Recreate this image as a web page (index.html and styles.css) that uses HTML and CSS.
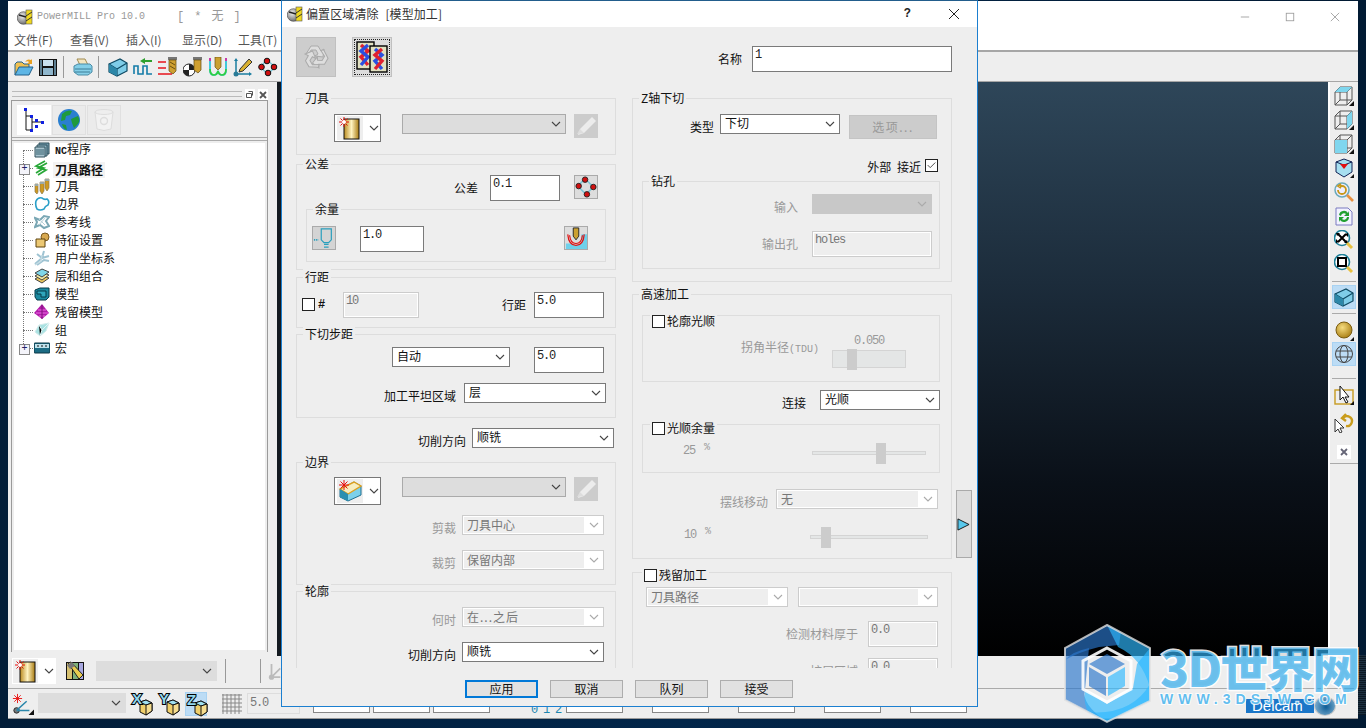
FILE: index.html
```html
<!DOCTYPE html>
<html lang="zh-CN">
<head>
<meta charset="utf-8">
<title>PowerMILL Pro 10.0</title>
<link rel="stylesheet" href="styles.css">
</head>
<body>
<svg class="sprite" aria-hidden="true">
  <defs>
    <linearGradient id="gold" x1="0" x2="1" y1="0" y2="0"><stop offset="0" stop-color="#b98a1e"/><stop offset=".5" stop-color="#fff3c0"/><stop offset="1" stop-color="#a87a10"/></linearGradient>
    <radialGradient id="ball" cx=".4" cy=".35" r=".7"><stop offset="0" stop-color="#f6dc7e"/><stop offset="1" stop-color="#a77c12"/></radialGradient>
    <radialGradient id="sph" cx=".4" cy=".35" r=".7"><stop offset="0" stop-color="#eee"/><stop offset="1" stop-color="#666"/></radialGradient>
  </defs>
  <symbol id="app" viewBox="0 0 16 16"><circle cx="6.5" cy="9" r="6.3" fill="url(#sph)" stroke="#444" stroke-width=".6"/><rect x="9" y="1" width="6" height="14" fill="#f0d820" stroke="#555" stroke-width=".6"/><path d="M9 7l6-4M9 12l6-4" stroke="#333"/><path d="M2 6l7 2" stroke="#222" stroke-width="1.4"/></symbol>
  <symbol id="folder" viewBox="0 0 20 20"><path d="M1 18V7l2-2h5l2 2h5v3" fill="#f0c050" stroke="#22618c"/><path d="M1 18l4-8h14l-4 8z" fill="#5db5e5" stroke="#22618c"/><path d="M11 5c2-3 4-3 6-2l1-1v5h-5l2-2c-1-1-2-1-4 0z" fill="#e8a020"/></symbol>
  <symbol id="save" viewBox="0 0 20 20"><rect x="1" y="2" width="18" height="17" fill="#111"/><rect x="5" y="3" width="10" height="6" fill="#c9e0ee"/><rect x="5" y="11" width="10" height="7" fill="#8fb6cc"/><rect x="2" y="3" width="2" height="15" fill="#5d7f92"/><rect x="16" y="3" width="2" height="15" fill="#5d7f92"/></symbol>
  <symbol id="print" viewBox="0 0 20 20"><path d="M4 2h8l3 6H7z" fill="#f4e6c0" stroke="#a08a50"/><path d="M1 9l4-2h12l2 2v6l-4 3H5l-4-3z" fill="#84cfe8" stroke="#4b8ba5"/><path d="M2 12h16M2 15h15" stroke="#3c7d96"/></symbol>
  <symbol id="block" viewBox="0 0 20 20"><path d="M1 7l11-5 7 4v8l-10 5-8-4z" fill="#7fcde8" stroke="#0f4a63" stroke-width="1.2"/><path d="M1 7l8 5v7M9 12l10-6" fill="none" stroke="#0f4a63" stroke-width="1.2"/><path d="M1 7l8 5v7l-8-4z" fill="#2c87a8"/></symbol>
  <symbol id="path" viewBox="0 0 20 20"><path d="M1 17V9h4v8h5V9h4v8h5" fill="none" stroke="#157ca8" stroke-width="1.6"/><path d="M7 4l5-3v2h7v2h-7v2z" fill="#2ea02e"/></symbol>
  <symbol id="toolred" viewBox="0 0 20 20"><path d="M0 5h8M0 11h8M0 17h14" stroke="#e8141c" stroke-width="1.6"/><rect x="10" y="0" width="9" height="3" fill="#777"/><path d="M11 3h7v11l-3 3-4-3z" fill="#cfa030" stroke="#5d4810" stroke-width=".7"/><path d="M12 5l5 3M12 9l5 3" stroke="#6a5010"/></symbol>
  <symbol id="toolshade" viewBox="0 0 20 20"><circle cx="6" cy="13" r="6" fill="#fff" stroke="#222"/><path d="M6 7a6 6 0 0 1 6 6H6zM6 13v6a6 6 0 0 1-6-6z" fill="#222"/><rect x="10" y="0" width="9" height="3" fill="#777"/><path d="M11 3h7v10l-3 3-4-3z" fill="#cfa030" stroke="#5d4810" stroke-width=".7"/></symbol>
  <symbol id="uw" viewBox="0 0 20 20"><path d="M2 1v12q0 5 4 5 3 0 4-4 1 4 4 4 4 0 4-5V1" fill="none" stroke="#22c0d8" stroke-width="1.7"/><path d="M2 12q0 6 4 6 3 0 4-4 1 4 4 4 4 0 4-6" fill="none" stroke="#30d040" stroke-width="1.7"/><path d="M2 1v3M18 1v3" stroke="#e020a0" stroke-width="1.7"/><path d="M7 0h6v10l-3 3-3-3z" fill="#caa030" stroke="#6a5010" stroke-width=".7"/></symbol>
  <symbol id="pencil" viewBox="0 0 20 20"><path d="M3 3v14h14" fill="none" stroke="#1a7da0" stroke-width="1.5"/><path d="M3 1l2 3H1zM19 17l-3 2v-4z" fill="#1a7da0"/><circle cx="3" cy="17" r="2.5" fill="#2a7a96"/><path d="M7 12l9-10 3 3-9 9-4 1z" fill="#d9b030" stroke="#333"/></symbol>
  <symbol id="diamond" viewBox="0 0 20 20"><path d="M9 3l8 7-7 7-8-7z" fill="none" stroke="#7cc7d7" stroke-width="1.6"/><g fill="#d01010" stroke="#111"><circle cx="9" cy="4" r="2.8"/><circle cx="16" cy="10" r="2.8"/><circle cx="10" cy="16" r="2.8"/><circle cx="3.5" cy="10" r="2.8"/></g></symbol>
  <symbol id="nc" viewBox="0 0 16 16"><path d="M5 1h10v11H5z" fill="#6e98aa" stroke="#33525f"/><path d="M3 3h10v11H3z" fill="#8db3c2" stroke="#33525f"/><path d="M1 5h10v10H1z" fill="#a9c4cf" stroke="#33525f"/><path d="M2 8h8M2 10h8M2 12h8" stroke="#35606f"/></symbol>
  <symbol id="tp" viewBox="0 0 16 16"><path d="M13 3L4 8l8 2-8 5M11 1L2 6l8 2-8 5" fill="none" stroke="#28a838" stroke-width="1.7"/></symbol>
  <symbol id="tls" viewBox="0 0 16 16"><path d="M1 6h3v8l-1 2-2-2zM6 4h4v9l-2 3-2-3zM11 1h4v9l-2 3-2-3z" fill="#cf9a20" stroke="#8a7a50" stroke-width=".7"/><path d="M1 6h3v2H1zM6 4h4v2H6zM11 1h4v2h-4z" fill="#9aa"/></symbol>
  <symbol id="bd" viewBox="0 0 16 16"><path d="M2 5q2-4 6-3 2 2 5 1 3 2 1 6-3 1-4 4-4 2-7 0-2-4-1-8z" fill="#fff" stroke="#2a9fc8" stroke-width="1.6"/></symbol>
  <symbol id="rl" viewBox="0 0 16 16"><path d="M1 4l5 2 4-4 5 1-3 4 3 5-5 2-4-3-5 2 2-5z" fill="none" stroke="#7aa7b4" stroke-width="2"/><path d="M5 5l6 6M11 4l-6 7" stroke="#b9d1d8"/></symbol>
  <symbol id="ft" viewBox="0 0 16 16"><circle cx="11" cy="5" r="4" fill="#d8a950" stroke="#7a5a20"/><path d="M2 7h9v8H2z" fill="#ecc873" stroke="#5e4510"/></symbol>
  <symbol id="ucs" viewBox="0 0 16 16"><path d="M1 14L8 8l2-7M8 8l7-2M3 15l7-5 5 1M8 8L3 4" fill="none" stroke="#9ec3d2" stroke-width="2"/><path d="M1 15l6-4 1-6" fill="none" stroke="#c5dbe3" stroke-width="1.4"/></symbol>
  <symbol id="ly" viewBox="0 0 16 16"><path d="M1 11l7-4 7 3-7 5z" fill="#ecc85c" stroke="#444"/><path d="M1 8l7-4 7 3-7 5z" fill="#f1e9a5" stroke="#444"/><path d="M1 5l7-4 7 3-7 5z" fill="#7fd6e8" stroke="#444"/></symbol>
  <symbol id="md" viewBox="0 0 16 16"><path d="M1 4l5-2h9v9l-3 3H3l-2-3z" fill="#1c8aa0" stroke="#063a48"/><path d="M3 5h9v6H7V8H3z" fill="#2fa6bb" stroke="#063a48"/></symbol>
  <symbol id="st" viewBox="0 0 16 16"><path d="M8 0l7 9-7 6-8-6z" fill="#b01ca8"/><path d="M4 6l8 0M2 9l12 0M5 12h6" stroke="#f06ae6"/><path d="M8 1v14" stroke="#7d1278"/></symbol>
  <symbol id="gp" viewBox="0 0 16 16"><path d="M1 10l4-7 10-2-3 8-6 5z" fill="#a9e2e2" stroke="#d2ecec"/><path d="M5 3l3 5-2 6M8 8l7-7" stroke="#e2f5f5"/></symbol>
  <symbol id="mc" viewBox="0 0 16 16"><rect y="3" width="16" height="10" rx="1" fill="#1c6c84" stroke="#0b3744"/><rect x="1" y="4" width="14" height="4" fill="#bfe2ec"/><path d="M3 6h2M7 6h2M11 6h2" stroke="#111"/></symbol>
  <symbol id="tabtree" viewBox="0 0 22 24"><path d="M3 1v21h7M3 8h6v13M9 14h11" fill="none" stroke="#111"/><g fill="#1020e0"><rect x="1" y="0" width="3" height="3"/><rect x="7" y="7" width="3" height="3"/><rect x="12" y="11" width="3" height="3"/><rect x="18" y="13" width="3" height="3"/><rect x="12" y="17" width="3" height="3"/><rect x="7" y="21" width="3" height="3"/></g></symbol>
  <symbol id="globe" viewBox="0 0 24 24"><circle cx="12" cy="12" r="11" fill="#2a7fd0"/><path d="M5 6q5-5 10-3l-2 4-4 1-1 4-4 1zM14 11l7-3q3 5-1 9l-3 3-2-5zM5 16l4 1 1 5q-4-1-5-6z" fill="#1f9a3c"/></symbol>
  <symbol id="trash" viewBox="0 0 22 24"><path d="M2 4l2 17q7 3 14 0l2-17z" fill="#f2f2f2" stroke="#ddd"/><ellipse cx="11" cy="4" rx="9" ry="2.5" fill="#eee" stroke="#ddd"/><circle cx="11" cy="13" r="3.5" fill="none" stroke="#ddd" stroke-width="1.4"/></symbol>
  <symbol id="recycle" viewBox="0 0 32 32"><g fill="#dedede" stroke="#aaa"><path id="rc-arm" d="M6 13l5-8h7l3 5 3-2-1 8-8-1 3-2-2-4h-5l-3 6z"/><path d="M6 13l5-8h7l3 5 3-2-1 8-8-1 3-2-2-4h-5l-3 6z" transform="rotate(120 16 16)"/><path d="M6 13l5-8h7l3 5 3-2-1 8-8-1 3-2-2-4h-5l-3 6z" transform="rotate(240 16 16)"/></g></symbol>
  <symbol id="dna" viewBox="0 0 32 32"><rect x="1" y="1" width="17" height="27" fill="#e1e0c0" stroke="#000" stroke-width="1.4"/><path d="M5 4l7 6-7 6 7 8" fill="none" stroke="#e02030" stroke-width="3.400"/><path d="M12 4l-7 6 7 6-7 8" fill="none" stroke="#2a4fe0" stroke-width="3.400"/><rect x="14" y="5" width="17" height="26" fill="#e1e0c0" stroke="#000" stroke-width="1.4"/><path d="M19 8l7 6-7 6 7 8" fill="none" stroke="#2a4fe0" stroke-width="3.400"/><path d="M26 8l-7 6 7 6-7 8" fill="none" stroke="#e02030" stroke-width="3.400"/></symbol>
  <symbol id="newtool" viewBox="0 0 24 24"><rect x="6" y="3" width="15" height="20" fill="url(#gold)" stroke="#111"/><g stroke="#e81010"><path d="M1 6h10M6 1v10M2.500 2.500l7 7M9.500 2.500l-7 7"/></g><circle cx="6" cy="6" r="2" fill="#fff"/></symbol>
  <symbol id="newbd" viewBox="0 0 24 24"><path d="M2 10l14-7 7 4v9l-13 6-8-4z" fill="#7cd0ea" stroke="#1d6f90"/><path d="M2 10l8 5 13-8-7-4z" fill="#f7edc0" stroke="#dda020" stroke-width="1.4"/><path d="M2 10l8 5v7l-8-4z" fill="#2b8fb0"/><g stroke="#e81010"><path d="M1 6h10M6 1v10M2.500 2.500l7 7M9.500 2.500l-7 7"/></g></symbol>
  <symbol id="lib" viewBox="0 0 20 20"><rect x="1" y="1" width="18" height="18" fill="#111"/><rect x="2" y="2" width="5" height="16" fill="#d6c070"/><rect x="8" y="2" width="5" height="16" fill="#7fb07a"/><rect x="14" y="2" width="4" height="16" fill="#a8a8e0"/><path d="M3 2l3-1 12 13-4 4z" fill="#e8cc50" stroke="#222"/><path d="M2 4l5-3 3 4-5 3z" fill="#777"/></symbol>
  <symbol id="edit" viewBox="0 0 24 24"><path d="M6 15L18 3l4 4-12 12-6 2z" fill="#ececec"/><path d="M3 20l3-5 4 4z" fill="#ddd"/></symbol>
  <symbol id="chkdia" viewBox="0 0 24 24"><path d="M11 3l9 9-8 8-9-9z" fill="none" stroke="#7cc7d7" stroke-width="1.8"/><g fill="#d01010" stroke="#222"><circle cx="11" cy="4" r="3"/><circle cx="20" cy="12" r="3"/><circle cx="13" cy="20" r="3"/><circle cx="4" cy="11" r="3"/></g></symbol>
  <symbol id="thick" viewBox="0 0 24 24"><path d="M9 2h11v12l-3 3h-5l-3-3z" fill="none" stroke="#2a9fbd" stroke-width="1.3"/><path d="M1 14h5" stroke="#2a9fbd" stroke-width="1.8" stroke-dasharray="1.400 1"/><path d="M12 19h5M12 22h5" stroke="#2a9fbd" stroke-width="1.2"/></symbol>
  <symbol id="rad" viewBox="0 0 24 24"><path d="M1 18h5q6 3 12 0V8h6v16H1z" fill="#6fd0ea"/><path d="M5 9q1 9 7 9t7-9M3 8q1 12 9 12t9-12" fill="none" stroke="#e01010" stroke-width="1.3"/><path d="M9 1h6v9l-3 4-3-4z" fill="#caa030" stroke="#222"/></symbol>
  <symbol id="ax" viewBox="0 0 24 24"><circle cx="5" cy="19" r="3" fill="#777" stroke="#222"/><path d="M5 19L16 9M5 19h14" stroke="#2a86aa" stroke-width="1.6"/><g stroke="#e81010"><path d="M1 6h10M6 1v10M2.500 2.500l7 7M9.500 2.500l-7 7"/></g><path d="M24 24h-6l6-6z" fill="#111"/></symbol>
  <symbol id="axg" viewBox="0 0 16 24"><circle cx="4" cy="19" r="3" fill="#bbb"/><path d="M4 19V4M4 19h10M4 19L14 9" stroke="#bbb" stroke-width="2"/></symbol>
  <symbol id="vx" viewBox="0 0 22 24"><path d="M9 10l6-2 6 3v8l-6 4-6-3z" fill="#f0cf6a" stroke="#111"/><path d="M9 10l6 3 6-2-6-3z" fill="#9fe0f0" stroke="#111"/><path d="M15 13v10l6-4v-8z" fill="#f6dd8e" stroke="#111"/></symbol>
  <symbol id="grid" viewBox="0 0 20 20"><path d="M0 1h20M0 5h20M0 9h20M0 13h20M0 17h20M1 0v20M5 0v20M9 0v20M13 0v20M17 0v20" stroke="#888"/></symbol>
  <symbol id="cbase" viewBox="0 0 20 20"><path d="M1 6h12v13H1zM6 1h12v13H6zM1 6l5-5M13 6l5-5M1 19l5-5M13 19l5-5" fill="none" stroke="#555"/><path d="M20 20h-5l5-5z" fill="#111"/></symbol>
  <symbol id="isored" viewBox="0 0 20 20"><path d="M10 1l8 3v10l-8 5-8-5V4z" fill="#a7dff0" stroke="#125"/><path d="M2 4l8 3 8-3" fill="none" stroke="#125"/><path d="M6 6h8l-4 5z" fill="#e01010"/><path d="M20 20h-4l4-4z" fill="#111"/></symbol>
  <symbol id="zoomu" viewBox="0 0 20 20"><circle cx="8" cy="8" r="7" fill="#eef" stroke="#6aa9bb" stroke-width="1.5"/><path d="M4 8a4 4 0 1 0 4-4H6M7 2L4 4l3 2" fill="none" stroke="#c89818" stroke-width="1.8"/><path d="M13 13l6 6" stroke="#e89040" stroke-width="2.6"/></symbol>
  <symbol id="refresh" viewBox="0 0 20 20"><path d="M2 2h12l4 4v13H2z" fill="#f2f2ff" stroke="#7a7ac0"/><path d="M5 9a5 5 0 0 1 9-2l1-2v5h-5l2-2a3 3 0 0 0-5 2zM15 11a5 5 0 0 1-9 3l-1 2v-5h5l-2 2a3 3 0 0 0 5-2z" fill="#20a030"/></symbol>
  <symbol id="zfit" viewBox="0 0 20 20"><circle cx="8" cy="8" r="7.500" fill="#fff" stroke="#1d7f98" stroke-width="1.6"/><path d="M4 4l8 8M12 4l-8 8" stroke="#000" stroke-width="2"/><path d="M2 3h4L3 6zM14 3v4l-3-3zM2 13V9l3 3zM14 13h-4l3-3z"/><path d="M13 13l5 5" stroke="#e8c040" stroke-width="3"/></symbol>
  <symbol id="zbox" viewBox="0 0 20 20"><circle cx="8" cy="8" r="7.500" fill="#fff" stroke="#1d7f98" stroke-width="1.6"/><rect x="4" y="4" width="8" height="8" fill="none" stroke="#000" stroke-width="2"/><path d="M13 13l5 5" stroke="#e8c040" stroke-width="3"/></symbol>
  <symbol id="orb" viewBox="0 0 20 20"><circle cx="10" cy="9" r="8" fill="url(#ball)" stroke="#7a5c10"/><path d="M20 20h-4l4-4z" fill="#111"/></symbol>
  <symbol id="wire" viewBox="0 0 20 20"><circle cx="10" cy="10" r="8.500" fill="none" stroke="#444"/><ellipse cx="10" cy="10" rx="4" ry="8.500" fill="none" stroke="#444"/><path d="M2 7h16M2 13h16" stroke="#444"/></symbol>
  <symbol id="cur" viewBox="0 0 20 20"><rect x="1" y="5" width="18" height="14" fill="none" stroke="#c69a20" stroke-width="1.4"/><path d="M6 1v14l3-3 3 6 2-1-3-5h4z" fill="#fff" stroke="#111"/><path d="M20 20h-4l4-4z" fill="#111"/></symbol>
  <symbol id="curu" viewBox="0 0 20 20"><path d="M1 6v13l3-3 2 4 2-1-2-4h4z" fill="#fff" stroke="#333"/><path d="M9 5a5 5 0 1 1 3 8M12 1L8 5l4 3" fill="none" stroke="#c99c1c" stroke-width="2.400"/></symbol>
  <symbol id="chev" viewBox="0 0 10 6"><path d="M1 1l4 4 4-4" fill="none" stroke="currentColor" stroke-width="1.100"/></symbol>
  <symbol id="tick" viewBox="0 0 13 13"><path d="M2 6l3 3 6-6" fill="none" stroke="#333"/></symbol>
</svg>

<div class="desk">
  <section class="app">
    <header class="app-title">
      <svg class="ic16"><use href="#app"/></svg>
      <span class="app-name">PowerMILL Pro 10.0</span>
      <span class="app-doc">[ * 无 ]</span>
      <span class="win-btns">
        <svg class="win-ic" viewBox="0 0 12 12"><path d="M1 6h10" stroke="#999"/></svg>
        <svg class="win-ic" viewBox="0 0 12 12"><rect x="1.500" y="1.500" width="9" height="9" fill="none" stroke="#999"/></svg>
        <svg class="win-ic" viewBox="0 0 12 12"><path d="M1 1l10 10M11 1L1 11" stroke="#999"/></svg>
      </span>
    </header>
    <nav class="menu"><span>文件(F)</span><span>查看(V)</span><span>插入(I)</span><span>显示(D)</span><span>工具(T)</span></nav>
    <div class="toolbar">
      <svg class="ic20 tight"><use href="#folder"/></svg>
      <svg class="ic20"><use href="#save"/></svg>
      <i class="vsep"></i>
      <svg class="ic20"><use href="#print"/></svg>
      <i class="vsep"></i>
      <svg class="ic20"><use href="#block"/></svg>
      <svg class="ic20"><use href="#path"/></svg>
      <svg class="ic20"><use href="#toolred"/></svg>
      <svg class="ic20"><use href="#toolshade"/></svg>
      <svg class="ic20"><use href="#uw"/></svg>
      <svg class="ic20"><use href="#pencil"/></svg>
      <svg class="ic20"><use href="#diamond"/></svg>
    </div>
    <main class="work">
      <aside class="explorer">
        <div class="grip"><i class="grip-lines"></i>
          <svg class="dock-btn" viewBox="0 0 10 11"><path d="M3.500 2.500h4v4M1.500 4.500h5v4h-5z" fill="none" stroke="#555"/></svg>
          <svg class="dock-btn" viewBox="0 0 10 11"><path d="M2 3l6 6M8 3L2 9" stroke="#555" stroke-width="1.800"/></svg>
        </div>
        <div class="frame">
          <div class="tabs">
            <span class="tab on"><svg class="ic-tab"><use href="#tabtree"/></svg></span>
            <span class="tab"><svg class="ic-tab"><use href="#globe"/></svg></span>
            <span class="tab"><svg class="ic-tab"><use href="#trash"/></svg></span>
          </div>
          <ul class="tree">
            <li class="node"><svg class="ic16"><use href="#nc"/></svg><span class="tl"><b class="lat">NC</b>程序</span></li>
            <li class="node plus"><svg class="ic16"><use href="#tp"/></svg><span class="tl active">刀具路径</span></li>
            <li class="node"><svg class="ic16"><use href="#tls"/></svg><span class="tl">刀具</span></li>
            <li class="node"><svg class="ic16"><use href="#bd"/></svg><span class="tl">边界</span></li>
            <li class="node"><svg class="ic16"><use href="#rl"/></svg><span class="tl">参考线</span></li>
            <li class="node"><svg class="ic16"><use href="#ft"/></svg><span class="tl">特征设置</span></li>
            <li class="node"><svg class="ic16"><use href="#ucs"/></svg><span class="tl">用户坐标系</span></li>
            <li class="node"><svg class="ic16"><use href="#ly"/></svg><span class="tl">层和组合</span></li>
            <li class="node"><svg class="ic16"><use href="#md"/></svg><span class="tl">模型</span></li>
            <li class="node"><svg class="ic16"><use href="#st"/></svg><span class="tl">残留模型</span></li>
            <li class="node"><svg class="ic16"><use href="#gp"/></svg><span class="tl">组</span></li>
            <li class="node plus last"><svg class="ic16"><use href="#mc"/></svg><span class="tl">宏</span></li>
          </ul>
        </div>
      </aside>
      <div class="viewport"></div>
      <aside class="viewbar">
        <svg class="vb"><use href="#cbase"/><polygon class="f-top" points="1,6 6,1 18,1 13,6"/></svg>
        <svg class="vb"><use href="#cbase"/><polygon class="f-right" points="13,6 18,1 18,14 13,19"/></svg>
        <svg class="vb"><use href="#cbase"/><polygon class="f-front" points="1,6 13,6 13,19 1,19"/></svg>
        <svg class="vb"><use href="#isored"/></svg>
        <svg class="vb"><use href="#zoomu"/></svg>
        <svg class="vb"><use href="#refresh"/></svg>
        <svg class="vb"><use href="#zfit"/></svg>
        <svg class="vb"><use href="#zbox"/></svg>
        <i class="hsep"></i>
        <span class="vb-on"><svg class="ic20"><use href="#block"/></svg></span>
        <i class="hsep lower"></i>
        <svg class="vb"><use href="#orb"/></svg>
        <span class="vb-on snug"><svg class="ic20"><use href="#wire"/></svg></span>
        <i class="hsep wide"></i>
        <svg class="vb"><use href="#cur"/></svg>
        <svg class="vb gap4"><use href="#curu"/></svg>
        <svg class="vb-x" viewBox="0 0 14 14"><rect width="14" height="14" fill="#fff"/><path d="M4 4l6 6M10 4l-6 6" stroke="#667" stroke-width="1.800"/></svg>
        <i class="hsep end"></i>
      </aside>
    </main>
    <div class="bar1">
      <span class="pick"><span class="pick-ic"><svg class="ic24"><use href="#newtool"/></svg></span><svg class="chev"><use href="#chev"/></svg></span>
      <svg class="ic20 lib-ic"><use href="#lib"/></svg>
      <span class="sel gray w121"><em></em><svg class="chev"><use href="#chev"/></svg></span>
      <i class="vsep tall a"></i>
      <i class="vsep tall b"></i>
      <svg class="ax-g"><use href="#axg"/></svg>
    </div>
    <div class="bar2">
      <svg class="ic24 ax-ic"><use href="#ax"/></svg>
      <span class="sel gray w88"><em></em><svg class="chev"><use href="#chev"/></svg></span>
      <span class="axbtn"><svg class="ic-ax"><use href="#vx"/></svg><b class="axl">X</b></span>
      <span class="axbtn"><svg class="ic-ax"><use href="#vx"/></svg><b class="axl">Y</b></span>
      <span class="axbtn on"><svg class="ic-ax"><use href="#vx"/></svg><b class="axl">Z</b></span>
      <svg class="ic20 grid-ic"><use href="#grid"/></svg>
      <span class="gridval num">5.0</span>
      <span class="fld f1"></span><span class="fld"></span><span class="fld"></span>
      <span class="mini num">0 1 2</span><span class="fld"></span>
      <span class="mini2"></span><span class="fld"></span>
      <span class="mini2"></span><span class="fld"></span>
      <span class="mini2"></span><span class="fld"></span>
      <span class="mini2"></span><span class="fld"></span>
      <span class="delcam"><span class="delcam-t">Delcam</span><i class="delcam-g"></i></span>
    </div>
  </section>

  <section class="dlg">
    <header class="dlg-title">
      <svg class="ic16"><use href="#app"/></svg>
      <span class="dlg-name">偏置区域清除 [模型加工]</span>
      <span class="dlg-q">?</span>
      <svg class="dlg-x" viewBox="0 0 12 12"><path d="M1 1l10 10M11 1L1 11" stroke="#222"/></svg>
    </header>
    <div class="dlg-body">
      <div class="form">
        <div class="head">
          <span class="big dis"><svg class="ic32"><use href="#recycle"/></svg></span>
          <span class="big focus"><svg class="ic32"><use href="#dna"/></svg></span>
          <span class="namebox"><span class="lbl">名称</span><span class="inp w200 num">1</span></span>
        </div>
        <div class="cols">
          <div class="col">
            <fieldset class="grp g-tool">
              <span class="lg">刀具</span>
              <div class="row pt15 ml37">
                <span class="pick boxed"><span class="pick-ic"><svg class="ic24"><use href="#newtool"/></svg></span><svg class="chev"><use href="#chev"/></svg></span>
                <span class="sel gray w164 ml21"><em></em><svg class="chev"><use href="#chev"/></svg></span>
                <span class="sq dis ml8"><svg class="ic24"><use href="#edit"/></svg></span>
              </div>
            </fieldset>
            <fieldset class="grp g-tol">
              <span class="lg">公差</span>
              <div class="row end pt10 pr17">
                <span class="lbl">公差</span>
                <span class="inp w70 num ml12">0.1</span>
                <span class="sq ml14"><svg class="ic20c"><use href="#chkdia"/></svg></span>
              </div>
              <fieldset class="grp sub g-thick">
                <span class="lg">余量</span>
                <div class="row pt16 pl5 pr17">
                  <span class="sq tint"><svg class="ic20c"><use href="#thick"/></svg></span>
                  <span class="inp w64 num ml24">1.0</span>
                  <span class="sq push"><svg class="ic20c"><use href="#rad"/></svg></span>
                </div>
              </fieldset>
            </fieldset>
            <fieldset class="grp g-step">
              <span class="lg">行距</span>
              <div class="row pt14 pr11">
                <span class="chk ml5 mt6"></span>
                <span class="hash num">#</span>
                <span class="inp dis w76 num ml18">10</span>
                <span class="lbl push">行距</span>
                <span class="inp w70 num ml8">5.0</span>
              </div>
            </fieldset>
            <fieldset class="grp g-down">
              <span class="lg">下切步距</span>
              <div class="row end pt12 pr11">
                <span class="sel w118"><em>自动</em><svg class="chev"><use href="#chev"/></svg></span>
                <span class="inp w70 num ml24">5.0</span>
              </div>
              <div class="row end mt10 pr9">
                <span class="lbl">加工平坦区域</span>
                <span class="sel w142 ml8"><em>层</em><svg class="chev"><use href="#chev"/></svg></span>
              </div>
            </fieldset>
            <div class="row end cut-row">
              <span class="lbl">切削方向</span>
              <span class="sel w142 ml6"><em>顺铣</em><svg class="chev"><use href="#chev"/></svg></span>
            </div>
            <fieldset class="grp g-bound">
              <span class="lg">边界</span>
              <div class="row pt14 ml37">
                <span class="pick boxed"><span class="pick-ic"><svg class="ic24"><use href="#newbd"/></svg></span><svg class="chev"><use href="#chev"/></svg></span>
                <span class="sel gray w164 ml21"><em></em><svg class="chev"><use href="#chev"/></svg></span>
                <span class="sq dis ml8"><svg class="ic24"><use href="#edit"/></svg></span>
              </div>
              <div class="row end mt10 pr11">
                <span class="lbl off">剪裁</span>
                <span class="sel off w142 ml6"><em>刀具中心</em><svg class="chev"><use href="#chev"/></svg></span>
              </div>
              <div class="row end mt14 pr11">
                <span class="lbl off">裁剪</span>
                <span class="sel off w142 ml6"><em>保留内部</em><svg class="chev"><use href="#chev"/></svg></span>
              </div>
            </fieldset>
            <fieldset class="grp g-prof">
              <span class="lg">轮廓</span>
              <div class="row end pt15 pr11">
                <span class="lbl off">何时</span>
                <span class="sel off w142 ml6"><em class="wide-dots">在...之后</em><svg class="chev"><use href="#chev"/></svg></span>
              </div>
              <div class="row end mt14 pr11">
                <span class="lbl">切削方向</span>
                <span class="sel w142 ml6"><em>顺铣</em><svg class="chev"><use href="#chev"/></svg></span>
              </div>
            </fieldset>
          </div>
          <div class="col">
            <fieldset class="grp g-z">
              <span class="lg">Z轴下切</span>
              <div class="row end pt15 pr14">
                <span class="lbl">类型</span>
                <span class="sel w120 ml6"><em>下切</em><svg class="chev"><use href="#chev"/></svg></span>
                <span class="btn-off ml9">选项...</span>
              </div>
              <div class="row end mt20 pr13 ext">
                <span class="plain">外部 接近</span>
                <span class="chk ml4"><svg class="tick"><use href="#tick"/></svg></span>
              </div>
              <fieldset class="grp sub g-drill">
                <span class="lg">钻孔</span>
                <div class="row end pt12 pr7">
                  <span class="lbl off">输入</span>
                  <span class="sel dark w120 ml14"><em></em><svg class="chev"><use href="#chev"/></svg></span>
                </div>
                <div class="row end mt16 pr7">
                  <span class="lbl off">输出孔</span>
                  <span class="inp dis w120 num ml14">holes</span>
                </div>
              </fieldset>
            </fieldset>
            <fieldset class="grp g-hs">
              <span class="lg">高速加工</span>
              <fieldset class="grp sub g-sm">
                <span class="lg lg-chk"><span class="chk"></span>轮廓光顺</span>
                <div class="row end pr33 sm-row">
                  <span class="lbl off sm-lbl">拐角半径<span class="lat-s">(TDU)</span></span>
                  <div class="sm-col ml13">
                    <span class="num off-t">0.050</span>
                    <span class="slider box"><i class="thumb t-a"></i></span>
                  </div>
                </div>
              </fieldset>
              <div class="row end mt8 pr11">
                <span class="lbl">连接</span>
                <span class="sel w120 ml14"><em>光顺</em><svg class="chev"><use href="#chev"/></svg></span>
              </div>
              <fieldset class="grp sub g-sm2">
                <span class="lg lg-chk lg-up"><span class="chk"></span>光顺余量</span>
                <div class="row pct-row pl40">
                  <span class="num off-t pct">25 <sup>%</sup></span>
                  <span class="slider line w114 push"><i class="thumb t-b"></i></span>
                  <i class="spacer13"></i>
                </div>
              </fieldset>
              <div class="row end mt16 pr13">
                <span class="lbl off">摆线移动</span>
                <span class="sel off w162 ml8"><em>无</em><svg class="chev"><use href="#chev"/></svg></span>
              </div>
              <div class="row pct-row2">
                <span class="num off-t pct">10 <sup>%</sup></span>
                <span class="slider line w118 push"><i class="thumb t-c"></i></span>
              </div>
            </fieldset>
            <fieldset class="grp g-rest">
              <span class="lg lg-chk2"><span class="chk"></span>残留加工</span>
              <div class="row pt14 ml13">
                <span class="sel off w142"><em>刀具路径</em><svg class="chev"><use href="#chev"/></svg></span>
                <span class="sel off w140 ml10"><em></em><svg class="chev"><use href="#chev"/></svg></span>
              </div>
              <div class="row end mt14 pr13">
                <span class="lbl off">检测材料厚于</span>
                <span class="inp dis w70 num ml10">0.0</span>
              </div>
              <div class="row end mt11 pr13">
                <span class="lbl off">扩展区域</span>
                <span class="inp dis w70 num ml10">0.0</span>
              </div>
            </fieldset>
          </div>
        </div>
      </div>
      <span class="expand"><svg class="exp-ic" viewBox="0 0 14 14"><path d="M1 1l12 6-12 6z" fill="#58c8ec" stroke="#111"/></svg></span>
    </div>
    <footer class="dlg-foot">
      <span class="fbtn primary">应用</span>
      <span class="fbtn">取消</span>
      <span class="fbtn">队列</span>
      <span class="fbtn">接受</span>
    </footer>
  </section>

  <div class="meter"></div>

  <div class="mark">
    <svg class="mark-hex" viewBox="0 0 90 100">
      <defs><clipPath id="hexclip"><polygon points="44,1 87,24 87,77 44,98 2,76 2,24"/></clipPath></defs>
      <g clip-path="url(#hexclip)">
        <path class="b1" d="M2 24L44 1l14 6-2 14-20 2q-20 5-34 13z"/>
        <path class="b2" d="M44 1l43 23v40q-8-30-32-41z"/>
        <path class="b2" d="M87 60v17L44 98 24 88q44 4 63-28z"/>
        <path class="b1" d="M2 36q6-8 24-12l-4 42q-4 14 22 32L2 76z"/>
        <path class="b2" d="M22 66l22 14 26-16 4-24 13-16v53L44 98 26 90q-6-10-4-24z"/>
      </g>
      <polygon class="hex-edge" points="44,1 87,24 87,77 44,98 2,76 2,24"/>
      <polygon class="ring" points="44,24 68,37 68,65 44,78 20,65 20,37"/>
      <polygon class="b1" points="44,30 62,40 44,50 26,40"/>
      <polygon class="b1" points="26,43 43,53 43,72 26,62"/>
      <polygon class="b2" points="62,43 45,53 45,72 62,62"/>
    </svg>
    <div class="mark-text">
      <span class="mark-big">3D世界网</span>
      <span class="mark-url">WWW.3DSJW.COM</span>
    </div>
  </div>
</div>
</body>
</html>
```
FILE: styles.css
```css
* { box-sizing: border-box; }
html, body { margin: 0; height: 100%; overflow: hidden; }
body { font: 12px/16px "Noto Sans CJK SC", "Noto Sans", sans-serif; color: #111; }
.sprite { position: absolute; width: 0; height: 0; }
svg { display: block; flex: none; }
.ic16 { width: 16px; height: 16px; }
.ic20 { width: 20px; height: 20px; }
.ic24 { width: 24px; height: 24px; }
.ic32 { width: 32px; height: 32px; }
.ic20c { width: 22px; height: 22px; }
em { font-style: normal; }

.desk { position: relative; width: 1366px; height: 728px; overflow: hidden; background: linear-gradient(90deg, #021d38, #02264a 50%, #011a33); }

/* main window */
.app { position: absolute; left: 8px; top: 1px; width: 1350px; height: 718px; background: #fff; display: flex; flex-direction: column; border-bottom: 1px solid #9a9a9a; }
.app-title { height: 30px; display: flex; align-items: center; padding-left: 9px; padding-top: 1px; font: 10px/14px "Liberation Mono", "Noto Sans CJK SC", monospace; color: #999; flex: none; }
.app-name { margin-left: 4px; }
.app-doc { margin-left: 32px; font-size: 12px; letter-spacing: 1.400px; }
.win-btns { margin-left: auto; display: flex; gap: 35px; padding-right: 18px; }
.win-ic { width: 10px; height: 10px; }
.menu { height: 19px; display: flex; gap: 16px; padding-left: 6px; color: #555; flex: none; line-height: 18px; }
.menu span { width: 40px; white-space: nowrap; }
.toolbar { height: 32px; border-top: 2px solid #a6a6a6; border-bottom: 1px solid #a6a6a6; background: #eee; display: flex; align-items: center; gap: 5px; padding-left: 6px; flex: none; }
.tight { margin-right: -1px; }
.vsep { width: 1px; height: 22px; background: #999; margin-right: 4px; flex: none; }
.work { flex: none; height: 574px; display: flex; background: #eee; }

/* explorer */
.explorer { width: 269px; background: #eee; flex: none; padding-left: 3px; display: flex; flex-direction: column; }
.grip { height: 18px; display: flex; align-items: center; padding-left: 1px; padding-top: 6px; width: 257px; gap: 3px; flex: none; }
.grip-lines { flex: 1; height: 6px; border-top: 1px solid #bbb; border-bottom: 1px solid #bbb; }
.dock-btn { width: 10px; height: 11px; background: #fff; }
.frame { width: 257px; height: 552px; border: 1px solid #9a9a9a; border-bottom: 0; display: flex; flex-direction: column; flex: none; }
.tabs { height: 37px; flex: none; display: flex; padding: 4px 0 0 5px; border-bottom: 1px solid #aaa; gap: 1px; background: #eee; }
.tab { width: 34px; height: 30px; background: #ebebeb; border: 1px solid #e0e0e0; display: flex; align-items: center; justify-content: center; }
.tab.on { background: #fff; border-color: #fff; }
.ic-tab { width: 24px; height: 24px; }
.tree { list-style: none; margin: 2px 0 0; padding: 0; flex: 1; background: #fff; position: relative; border-top: 1px solid #aaa; box-shadow: 0 0 0 2px #eee inset; }
.tree::before { content: ""; position: absolute; left: 11px; top: 9px; height: 198px; border-left: 1px dotted #777; }
.node { position: relative; height: 18px; display: flex; align-items: center; padding-left: 22px; }
.node::before { content: ""; position: absolute; left: 11px; width: 10px; top: 9px; border-top: 1px dotted #777; }
.plus::after { content: "+"; position: absolute; left: 7px; top: 5px; width: 9px; height: 9px; border: 1px solid #888; background: #f4f4fa; font: 10px/7px "Liberation Mono", monospace; text-align: center; color: #226; }
.tl { margin-left: 5px; color: #111; white-space: nowrap; }
.lat { font: 700 10px/16px "Liberation Mono", monospace; }
.active { font-weight: 700; background: #f3f3f3; margin: 3px 0 0 3px; padding: 0 2px; }
.viewport { flex: 1; background: linear-gradient(180deg, #2e4659 0%, #1c2c3b 35%, #0a1018 70%, #000 100%); border-left: 4px solid #141a20; }

/* right view bar */
.viewbar { width: 30px; flex: none; background: #eee; border-left: 2px solid #fff; display: flex; flex-direction: column; align-items: center; padding-top: 4px; }
.vb { width: 20px; height: 20px; margin-bottom: 4px; flex: none; }
.f-top, .f-right, .f-front { fill: #7fd6ee; }
.hsep { display: block; width: 24px; height: 1px; background: #aaa; margin: 3px 0; flex: none; }
.hsep.lower { margin: 4px 0 7px; }
.hsep.wide { margin: 12px 0 6px; }
.hsep.end { width: 28px; margin-top: 4px; }
.vb-on { width: 24px; height: 24px; background: #bcdcf5; border: 1px solid #a8d2f2; display: flex; align-items: center; justify-content: center; flex: none; }
.vb-on.snug { margin-top: -3px; }
.gap4 { margin-top: 4px; margin-bottom: 12px; }
.vb-x { width: 14px; height: 14px; }

/* bottom bars */
.bar1 { height: 33px; flex: none; background: #eee; display: flex; align-items: center; padding: 0 0 3px 4px; border-bottom: 1px solid #aaa; }
.bar2 { flex: 1; background: #eee; display: flex; align-items: flex-start; padding-left: 4px; }
.pick { width: 44px; height: 26px; background: #fff; display: flex; align-items: center; flex: none; color: #444; }
.pick-ic { width: 25px; height: 24px; background: #eee; margin-left: 1px; display: flex; align-items: center; justify-content: center; }
.pick.boxed { width: 47px; height: 28px; border: 1px solid #777; }
.pick.boxed .pick-ic { width: 26px; margin-left: 2px; }
.chev { width: 10px; height: 6px; margin-left: 6px; color: #444; }
.lib-ic { margin-left: 9px; }
.bar1 .sel { margin-left: 11px; }
.a { height: 24px; margin-left: 8px; margin-right: 0; }
.b { height: 24px; margin-left: 34px; margin-right: 0; }
.ax-g { width: 14px; height: 22px; margin-left: 7px; }
.ax-ic { width: 22px; height: 24px; margin-top: 3px; }
.bar2 .sel { margin-top: 4px; margin-left: 4px; }
.axbtn { position: relative; width: 22px; height: 24px; margin-top: 3px; margin-left: 5px; flex: none; }
.axbtn.on { background: #bcdcf5; border: 1px solid #a8d2f2; }
.ic-ax { width: 22px; height: 24px; }
.axl { position: absolute; left: 1px; top: 0; font: 900 15px/14px "Liberation Sans", sans-serif; color: #8fd6ee; -webkit-text-stroke: 2px #000; paint-order: stroke fill; }
.grid-ic { margin: 5px 0 0 15px; }
.gridval { width: 53px; height: 21px; margin: 4px 0 0 5px; background: #eee; border: 1px solid #ddd; color: #777; padding: 2px; flex: none; }
.fld { width: 57px; height: 24px; border: 1px solid #888; background: #fff; margin-left: 3px; flex: none; }
.fld.f1 { margin-left: 13px; }
.mini { width: 73px; margin-top: 14px; color: #1c86b0; text-align: right; padding-right: 2px; }
.mini2 { width: 26px; }
.delcam { margin-left: auto; margin-right: 22px; margin-top: 10px; display: flex; align-items: center; width: 90px; height: 14px; }
.delcam-t { flex: 1; height: 14px; background: #1a76c8; color: #fff; font: 15px/14px "Liberation Sans", sans-serif; padding-left: 6px; }
.delcam-g { width: 22px; height: 20px; border-radius: 50%; background: radial-gradient(circle at 55% 55%, #0e5d96, #9cc4de); border: 1px solid #ccc; }

/* dialog */
.dlg { position: absolute; left: 281px; top: 0; width: 697px; height: 707px; background: #eee; border: 1px solid #1b7fd0; border-top-color: #225d8c; display: flex; flex-direction: column; }
.dlg-title { height: 26px; background: #fff; display: flex; align-items: center; padding-left: 5px; flex: none; }
.dlg-name { margin-left: 3px; color: #333; word-spacing: 4px; letter-spacing: .1px; }
.dlg-q { margin-left: auto; font: 700 12px/14px "Liberation Mono", monospace; color: #222; }
.dlg-x { width: 12px; height: 12px; margin: 0 17px 0 37px; }
.dlg-body { display: flex; padding-left: 14px; height: 641px; flex: none; }
.form { width: 656px; height: 641px; overflow: hidden; flex: none; }
.head { height: 71px; display: flex; align-items: flex-start; padding-top: 10px; gap: 16px; }
.big { width: 40px; height: 40px; border: 1px solid #c0c0c0; display: flex; align-items: center; justify-content: center; }
.big.dis { background: #cdcdcd; }
.big.focus { outline: 1px dotted #222; outline-offset: -3px; background: #ddd; }
.namebox { margin-left: auto; display: flex; margin-top: 9px; }
.namebox .lbl { margin-right: 10px; margin-top: 5px; }
.cols { display: flex; gap: 16px; align-items: flex-start; }
.col { width: 320px; flex: none; }
.grp { position: relative; margin: 0; padding: 0; min-width: 0; border: 1px solid #ddd; }
.lg { position: absolute; top: -9px; left: 6px; padding: 0 2px; background: #eee; display: flex; align-items: center; height: 16px; white-space: nowrap; color: #111; }
.lg-chk { top: -3px; left: 7px; }
.lg-chk.lg-up { top: -5px; }
.lg-chk2 { top: -6px; left: 9px; }
.lg .chk { margin-right: 2px; }

.g-tool { height: 57px; }
.g-tol { height: 106px; margin-top: 9px; }
.g-thick { width: 300px; height: 53px; margin: 8px 0 0 9px; }
.g-step { height: 51px; margin-top: 7px; }
.g-down { height: 84px; margin-top: 6px; }
.cut-row { margin-top: 10px; padding-right: 2px; height: 34px; }
.g-bound { height: 123px; }
.g-prof { height: 90px; margin-top: 6px; }
.g-z { height: 184px; }
.ext { height: 13px; align-items: center; word-spacing: 3px; }
.g-drill { width: 298px; height: 88px; margin: 9px 0 0 9px; }
.g-hs { height: 265px; margin-top: 12px; }
.g-sm { width: 298px; height: 67px; margin: 20px 0 0 9px; }
.g-sm2 { width: 298px; height: 49px; margin: 13px 0 0 9px; }
.g-rest { height: 120px; margin-top: 13px; }
.sm-row { padding-top: 18px; }
.sm-lbl { margin-top: 4px; }
.lat-s { font: 10px/16px "Liberation Mono", monospace; }
.sm-col { width: 74px; display: flex; flex-direction: column; align-items: center; }
.pct-row { padding-top: 17px; height: 38px; }
.pct-row2 { margin-top: 16px; padding-left: 51px; padding-right: 23px; height: 21px; }
.pct { margin-top: 2px; white-space: nowrap; }
.pct sup { font-size: 10px; vertical-align: 4px; line-height: 0; margin-left: 3px; }
.spacer13 { width: 13px; flex: none; }

.row { display: flex; align-items: flex-start; }
.end { justify-content: flex-end; }
.push { margin-left: auto; }
.pt10 { padding-top: 10px; } .pt12 { padding-top: 12px; } .pt14 { padding-top: 14px; } .pt15 { padding-top: 15px; } .pt16 { padding-top: 16px; }
.pr7 { padding-right: 7px; } .pr9 { padding-right: 9px; } .pr11 { padding-right: 11px; } .pr13 { padding-right: 13px; } .pr14 { padding-right: 14px; } .pr17 { padding-right: 17px; } .pr33 { padding-right: 33px; }
.pl5 { padding-left: 5px; } .pl40 { padding-left: 40px; }
.ml4 { margin-left: 4px; } .ml5 { margin-left: 5px; } .ml6 { margin-left: 6px; } .ml8 { margin-left: 8px; } .ml9 { margin-left: 9px; } .ml10 { margin-left: 10px; } .ml12 { margin-left: 12px; } .ml13 { margin-left: 13px; } .ml14 { margin-left: 14px; } .ml18 { margin-left: 18px; } .ml21 { margin-left: 21px; } .ml24 { margin-left: 24px; } .ml37 { margin-left: 37px; }
.mt6 { margin-top: 6px; } .mt8 { margin-top: 8px; } .mt10 { margin-top: 10px; } .mt11 { margin-top: 11px; } .mt14 { margin-top: 14px; } .mt16 { margin-top: 16px; } .mt20 { margin-top: 20px; }

.lbl { margin-top: 5px; white-space: nowrap; color: #111; }
.lbl.off, .off-t { color: #999; }
.plain { white-space: nowrap; }
.num { font: 12px/14px "Liberation Mono", monospace; letter-spacing: -1.200px; }
.hash { margin: 6px 0 0 3px; width: 7px; font-weight: 700; }
.inp { height: 26px; border: 1px solid #7a7a7a; background: #fff; padding: 1px 2px; flex: none; color: #222; }
.inp.dis { border-color: #ccc; background: #eee; box-shadow: inset 0 0 0 1px #fff; color: #777; }
.w64 { width: 64px; } .w70 { width: 70px; } .w76 { width: 76px; } .w88 { width: 88px; } .w114 { width: 114px; } .w118 { width: 118px; } .w120 { width: 120px; } .w121 { width: 121px; } .w140 { width: 140px; } .w142 { width: 142px; } .w162 { width: 162px; } .w164 { width: 164px; } .w200 { width: 200px; }

.sel { height: 20px; border: 1px solid #7a7a7a; background: #fff; display: flex; align-items: center; padding: 0 4px; flex: none; line-height: 16px; }
.sel em { flex: 1; margin-top: -2px; white-space: nowrap; }
.sel .chev { margin-left: 0; }
.sel.gray { background: #ddd; border-color: #aaa; }
.bar1 .sel.gray, .bar2 .sel.gray { border-color: #ddd; }
.sel.dark { background: #c8c8c8; border-color: #c8c8c8; }
.sel.dark .chev { color: #aaa; }
.sel.off { border-color: #ccc; background: #fff; padding: 1px 4px 1px 1px; align-items: stretch; }
.sel.off em { background: #eee; color: #777; padding-left: 3px; margin: 0 5px 0 0; }
.sel.off em.wide-dots { letter-spacing: 1px; }
.sel.off .chev { color: #aaa; align-self: center; }
.sq { width: 24px; height: 24px; border: 1px solid #aaa; background: #ddd; display: flex; align-items: center; justify-content: center; flex: none; }
.sq.dis { background: #ccc; border-color: #ccc; }
.sq.tint { background: #d4d4d4; }
.chk { width: 13px; height: 13px; border: 1px solid #222; background: #fff; flex: none; display: block; }
.tick { width: 11px; height: 11px; }
.btn-off { width: 88px; height: 24px; margin-top: 1px; background: #ccc; color: #999; text-align: center; line-height: 22px; border: 1px solid #c4c4c4; flex: none; letter-spacing: 1.500px; }

.slider { position: relative; display: block; flex: none; }
.slider.box { width: 74px; height: 18px; background: #e4e6e6; border: 1px solid #d4d4d4; margin-top: 2px; }
.slider.line { height: 4px; background: #e4e6e6; border: 1px solid #d4d4d4; margin-top: 9px; }
.thumb { position: absolute; width: 10px; height: 21px; background: #ccc; top: -9px; }
.t-a { left: 14px; top: -2px; }
.t-b { left: 63px; }
.t-c { left: 10px; }

.expand { width: 16px; height: 68px; margin: 463px 0 0 4px; background: #ddd; border: 1px solid #aaa; display: flex; align-items: center; flex: none; }
.exp-ic { width: 13px; height: 13px; }

.dlg-foot { display: flex; gap: 12px; padding: 12px 0 0 183px; }
.fbtn { width: 73px; height: 18px; background: #e1e1e1; border: 1px solid #adadad; text-align: center; line-height: 16px; color: #111; }
.fbtn.primary { border: 2px solid #0078d7; line-height: 14px; }

/* right-edge meter */
.meter { position: absolute; left: 1358px; top: 655px; width: 8px; height: 60px; background: repeating-linear-gradient(180deg, #1c3040 0 1px, #0b1824 1px 2px); }

/* watermark */
.mark { position: absolute; left: 1063px; top: 624px; width: 300px; height: 100px; display: flex; }
.mark-hex { width: 90px; height: 100px; flex: none; }
.b1 { fill: rgba(42, 118, 203, .66); }
.b2 { fill: rgba(47, 185, 255, .66); }
.hex-edge { fill: none; stroke: rgba(225, 225, 225, .8); stroke-width: 2; }
.ring { fill: none; stroke: #fff; stroke-width: 3; opacity: .9; }
.mark-text { margin-left: 7px; display: flex; flex-direction: column; }
.mark-big { font: 900 48px/54px "Noto Sans CJK SC", sans-serif; color: rgba(47, 170, 235, .7); -webkit-text-stroke: 3px rgba(255,255,255,.9); paint-order: stroke fill; margin-top: 15px; letter-spacing: -2px; white-space: nowrap; }
.mark-url { font: 700 14px/14px "Liberation Sans", sans-serif; letter-spacing: 5px; color: rgba(47, 170, 235, .75); -webkit-text-stroke: 2px rgba(255,255,255,.85); paint-order: stroke fill; margin-top: -1px; white-space: nowrap; }
```
